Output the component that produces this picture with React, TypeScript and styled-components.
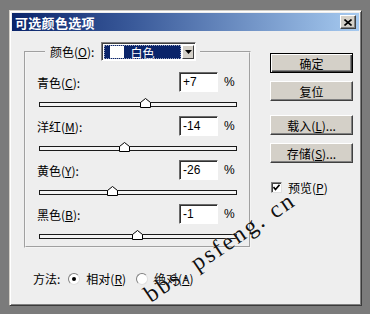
import React from "react";
import styled, { createGlobalStyle } from "styled-components";

const Global = createGlobalStyle`
  html, body { margin: 0; padding: 0; }
  body {
    background: #7b7b7b;
    font-family: "Liberation Sans", "Noto Sans CJK SC", sans-serif;
    font-size: 12px;
    color: #000;
  }
`;

const Page = styled.div`
  width: 370px;
  height: 314px;
  box-sizing: border-box;
  padding: 10px 0 0 9px;
`;

const Dialog = styled.div`
  position: relative;
  width: 353px;
  height: 296px;
  box-sizing: border-box;
  padding: 2px;
  background: #eeeeee;
  border: 1px solid;
  border-color: #d4d0c8 #3a3a3a #3a3a3a #d4d0c8;
  box-shadow: inset 1px 1px #ffffff, inset -1px -1px #808080;
  overflow: hidden;
`;

const TitleBar = styled.div`
  height: 18px;
  display: flex;
  align-items: center;
  justify-content: space-between;
  padding: 0 3px 0 3px;
  background: linear-gradient(to right, #0a246a 0%, #3a5a9a 35%, #a6caf0 100%);
`;

const Title = styled.span`
  color: #fff;
  font-weight: bold;
  font-size: 13px;
  font-family: "Noto Sans CJK SC", sans-serif;
  letter-spacing: 0.3px;
`;

const CloseBtn = styled.div`
  width: 16px;
  height: 14px;
  box-sizing: border-box;
  background: #d4d0c8;
  border: 1px solid;
  border-color: #ffffff #404040 #404040 #ffffff;
  box-shadow: inset -1px -1px #808080;
  display: flex;
  align-items: center;
  justify-content: center;
`;

const Body = styled.div`
  display: flex;
  gap: 19px;
  padding: 11px 0 0 12px;
`;

const LeftCol = styled.div`
  display: flex;
  flex-direction: column;
`;

const Group = styled.fieldset`
  width: 227px;
  box-sizing: border-box;
  margin: 0;
  padding: 11px 11px 4px 11px;
  border: 2px groove #f4f4f4;
  display: flex;
  flex-direction: column;
  gap: 6px;
`;

const Legend = styled.legend`
  display: flex;
  align-items: center;
  gap: 7px;
  margin-left: 8px;
  padding: 0 4px 0 5px;
  background: #eeeeee;
`;

const Select = styled.div`
  width: 95px;
  height: 19px;
  box-sizing: border-box;
  display: flex;
  background: #fff;
  border: 1px solid;
  border-color: #808080 #ffffff #ffffff #808080;
  box-shadow: inset 1px 1px #404040;
  padding: 2px 1px 1px 2px;
`;

const Highlight = styled.div`
  flex: 1;
  display: flex;
  align-items: center;
  padding-left: 6px;
  margin-right: 1px;
  background: #0a246a;
  color: #fff;
  outline: 1px dotted #9aa4c0;
  outline-offset: -1px;
`;

const Swatch = styled.span`
  display: block;
  flex: 0 0 auto;
  width: 14px;
  height: 12px;
  margin-right: 6px;
  background: #fff;
`;

const ArrowBtn = styled.div`
  width: 12px;
  box-sizing: border-box;
  background: #d4d0c8;
  border: 1px solid;
  border-color: #ffffff #404040 #404040 #ffffff;
  display: flex;
  align-items: center;
  justify-content: center;
`;

const Block = styled.div`
  display: flex;
  flex-direction: column;
  gap: 6px;
`;

const Row = styled.div`
  display: flex;
  align-items: center;
  height: 20px;
`;

const Label = styled.span`
  flex: 1;
  font-family: "Noto Sans CJK SC", sans-serif;
  font-size: 12px;
`;

const U = styled.span`
  text-decoration: underline;
  text-underline-offset: 1px;
`;

const NumBox = styled.div`
  width: 39px;
  height: 20px;
  box-sizing: border-box;
  background: #fff;
  border: 1px solid;
  border-color: #6a6a6a #ffffff #ffffff #6a6a6a;
  box-shadow: inset 1px 1px #303030;
  padding: 2px 0 0 3px;
  font-family: "Liberation Sans", sans-serif;
  font-size: 12px;
`;

const Pct = styled.span`
  width: 14px;
  margin-left: 6px;
  font-family: "Liberation Sans", sans-serif;
`;

const Slider = styled.div`
  position: relative;
  width: 198px;
  height: 12px;
  margin-left: 2px;
  display: flex;
  align-items: center;
`;

const Track = styled.div`
  width: 100%;
  height: 5px;
  box-sizing: border-box;
  border: 1px solid #1a1a1a;
  background: #f4f4f4;
`;

const Thumb = styled.svg`
  position: absolute;
  top: 0px;
  width: 11px;
  height: 10px;
  margin-left: -5px;
`;

const MethodRow = styled.div`
  display: flex;
  align-items: center;
  margin: 22px 0 0 9px;
  font-family: "Noto Sans CJK SC", sans-serif;
`;

const RadioItem = styled.span<{ $first?: boolean }>`
  display: flex;
  align-items: center;
  gap: 6px;
  margin-left: ${(p) => (p.$first ? "8px" : "10px")};
`;

const RadioDot = styled.span<{ $on?: boolean }>`
  width: 12px;
  height: 12px;
  box-sizing: border-box;
  border-radius: 50%;
  background: #fff;
  border: 1px solid;
  border-color: #808080 #e0e0e0 #e0e0e0 #808080;
  display: flex;
  align-items: center;
  justify-content: center;
  &::after {
    content: "";
    width: 4px;
    height: 4px;
    border-radius: 50%;
    background: ${(p) => (p.$on ? "#000" : "transparent")};
  }
`;

const RightCol = styled.div`
  display: flex;
  flex-direction: column;
  padding-top: 11px;
`;

const Button = styled.div<{ $default?: boolean; $gap: number }>`
  width: 83px;
  height: 20px;
  box-sizing: border-box;
  margin-top: ${(p) => p.$gap}px;
  background: #d4d0c8;
  display: flex;
  align-items: center;
  justify-content: center;
  font-family: "Noto Sans CJK SC", sans-serif;
  font-size: 12px;
  border: 1px solid;
  border-color: ${(p) => (p.$default ? "#000" : "#ffffff #404040 #404040 #ffffff")};
  box-shadow: ${(p) =>
    p.$default
      ? "inset 1px 1px #ffffff, inset -1px -1px #404040, inset -2px -2px #808080"
      : "inset -1px -1px #808080"};
`;

const CheckRow = styled.div`
  display: flex;
  align-items: center;
  gap: 6px;
  margin-top: 16px;
  margin-left: 1px;
  font-family: "Noto Sans CJK SC", sans-serif;
`;

const CheckBox = styled.span`
  width: 11px;
  height: 11px;
  box-sizing: border-box;
  background: #fff;
  border: 1px solid;
  border-color: #808080 #e0e0e0 #e0e0e0 #808080;
  box-shadow: inset 1px 1px #404040;
  display: flex;
  align-items: center;
  justify-content: center;
`;

const Watermark = styled.div`
  position: absolute;
  left: 144px;
  top: 270px;
  transform: rotate(-34deg);
  transform-origin: left bottom;
  font-family: "Liberation Serif", serif;
  font-size: 24px;
  letter-spacing: 2.2px;
  white-space: pre;
  color: #111;
  text-shadow: 0 0 1px #fff;
  pointer-events: none;
`;

const channels = [
  { name: "青色", key: "C", value: 7 },
  { name: "洋红", key: "M", value: -14 },
  { name: "黄色", key: "Y", value: -26 },
  { name: "黑色", key: "B", value: -1 },
];

const fmt = (v: number) => (v > 0 ? `+${v}` : `${v}`);

export default function App() {
  return (
    <>
      <Global />
      <Page>
        <Dialog>
          <TitleBar>
            <Title>可选颜色选项</Title>
            <CloseBtn>
              <svg width="8" height="7" viewBox="0 0 8 7">
                <path d="M0.5 0.5 L7.5 6.5 M7.5 0.5 L0.5 6.5" stroke="#000" strokeWidth="1.6" />
              </svg>
            </CloseBtn>
          </TitleBar>
          <Body>
            <LeftCol>
              <Group>
                <Legend>
                  <Label>
                    颜色(<U>O</U>):
                  </Label>
                  <Select>
                    <Highlight>
                      <Swatch />
                      <span>白色</span>
                    </Highlight>
                    <ArrowBtn>
                      <svg width="7" height="4" viewBox="0 0 7 4">
                        <path d="M0 0 H7 L3.5 4 Z" fill="#000" />
                      </svg>
                    </ArrowBtn>
                  </Select>
                </Legend>
                {channels.map((c) => (
                  <Block key={c.key}>
                    <Row>
                      <Label>
                        {c.name}(<U>{c.key}</U>):
                      </Label>
                      <NumBox>{fmt(c.value)}</NumBox>
                      <Pct>%</Pct>
                    </Row>
                    <Slider>
                      <Track />
                      <Thumb
                        viewBox="0 0 11 10"
                        style={{ left: `${((c.value + 100) / 200) * 198}px` }}
                      >
                        <path
                          d="M0.5 9.5 V4.5 L5.5 0.5 L10.5 4.5 V9.5 Z"
                          fill="#fff"
                          stroke="#000"
                          strokeWidth="1"
                        />
                      </Thumb>
                    </Slider>
                  </Block>
                ))}
              </Group>
              <MethodRow>
                <span>方法:</span>
                <RadioItem $first>
                  <RadioDot $on />
                  <span>
                    相对(<U>R</U>)
                  </span>
                </RadioItem>
                <RadioItem>
                  <RadioDot />
                  <span>
                    绝对(<U>A</U>)
                  </span>
                </RadioItem>
              </MethodRow>
            </LeftCol>
            <RightCol>
              <Button $default $gap={0}>确定</Button>
              <Button $gap={8}>复位</Button>
              <Button $gap={14}>
                载入(<U>L</U>)...
              </Button>
              <Button $gap={8}>
                存储(<U>S</U>)...
              </Button>
              <CheckRow>
                <CheckBox>
                  <svg width="7" height="7" viewBox="0 0 7 7">
                    <path d="M0.5 3 L2.5 5.5 L6.5 0.8" stroke="#000" strokeWidth="1.6" fill="none" />
                  </svg>
                </CheckBox>
                <span>
                  预览(<U>P</U>)
                </span>
              </CheckRow>
            </RightCol>
          </Body>
          <Watermark>bbs. psfeng. cn</Watermark>
        </Dialog>
      </Page>
    </>
  );
}
